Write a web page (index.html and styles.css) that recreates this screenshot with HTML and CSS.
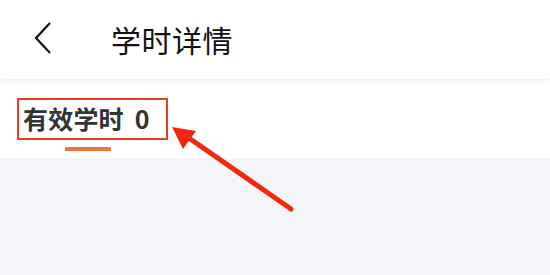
FILE: index.html
```html
<!DOCTYPE html>
<html lang="zh-CN">
<head>
  <meta charset="UTF-8" />
  <meta name="viewport" content="width=device-width, initial-scale=1.0"/>
  <title>学时详情</title>
  <link rel="stylesheet" href="styles.css">
</head>
<body>
  <div class="page">
    <header class="topbar">
      <span class="back">
        <svg width="20" height="34" viewBox="0 0 20 34">
          <polyline points="16,2 2,17 16,32" fill="none" stroke="#111" stroke-width="2.2" stroke-linejoin="miter"/>
        </svg>
      </span>
      <h1>学时详情</h1>
    </header>

    <nav class="tabs">
      <div class="tab active">
        <span class="tab-label">有效学时 0</span>
        <span class="tab-line"></span>
      </div>
    </nav>

    <main class="content"></main>

    <!-- annotation arrow -->
    <svg class="pointer" width="550" height="275" viewBox="0 0 550 275">
      <line x1="291" y1="209" x2="186" y2="136" stroke="#f3260e" stroke-width="5" stroke-linecap="round"/>
      <polygon points="172,127 196,131 183,149" fill="#f3260e"/>
    </svg>
  </div>
</body>
</html>
```

FILE: styles.css
```css
* {
  box-sizing: border-box;
  margin: 0;
  padding: 0;
}

body {
  font-family: "Noto Sans CJK SC", "Noto Sans", sans-serif;
  background: #f4f5f8;
  color: #111;
}

.page {
  position: relative;
  width: 550px;
  height: 275px;
  overflow: hidden;
  background: #f4f5f8;
}

.topbar {
  position: relative;
  z-index: 1;
  display: flex;
  align-items: center;
  height: 79px;
  background: #fff;
  box-shadow: 0 2px 5px rgba(0, 0, 0, 0.07);
}

.back {
  display: flex;
  width: 20px;
  margin-left: 34px;
  margin-top: -3px;
}

.topbar h1 {
  margin-left: 57px;
  margin-top: -2px;
  font-size: 30px;
  font-weight: 400;
  letter-spacing: 0.5px;
}

.tabs {
  display: flex;
  height: 79px;
  background: #fff;
  padding-left: 17px;
  padding-top: 19px;
}

.tab {
  display: flex;
  flex-direction: column;
  align-items: center;
}

.tab-label {
  display: block;
  padding: 0 16px 0 4px;
  height: 42px;
  line-height: 37px;
  border: 2px solid #e5401f;
  font-size: 25px;
  font-weight: 700;
  letter-spacing: 0.2px;
  word-spacing: 5px;
  color: #333;
}

.tab-line {
  width: 46px;
  height: 4px;
  margin-top: 7px;
  margin-left: -9px;
  background: #ee7646;
  border-radius: 1px;
}

.content {
  height: 117px;
}

.pointer {
  position: absolute;
  left: 0;
  top: 0;
  pointer-events: none;
}
```
